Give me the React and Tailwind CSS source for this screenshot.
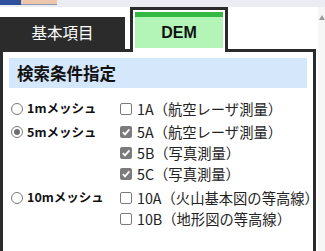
import React from 'react';

// 画面: DEM 検索条件指定パネル
const FONT = '"Noto Sans CJK JP", "Liberation Sans", sans-serif';

const GROUPS = [
  { label: '1mメッシュ', checked: false, items: [{ code: '1A', name: '（航空レーザ測量）', on: false }] },
  {
    label: '5mメッシュ',
    checked: true,
    items: [
      { code: '5A', name: '（航空レーザ測量）', on: true },
      { code: '5B', name: '（写真測量）', on: true },
      { code: '5C', name: '（写真測量）', on: true },
    ],
  },
  {
    label: '10mメッシュ',
    checked: false,
    items: [
      { code: '10A', name: '（火山基本図の等高線）', on: false },
      { code: '10B', name: '（地形図の等高線）', on: false },
    ],
  },
];

const Radio = ({ checked }) => (
  <span className="w-[12px] h-[12px] rounded-full border border-[#7a7a7a] bg-white flex items-center justify-center shrink-0">
    {checked && <span className="w-[6px] h-[6px] rounded-full bg-[#6e6e6e]" />}
  </span>
);

const Check = ({ on }) =>
  on ? (
    <span className="w-[12px] h-[12px] rounded-[2px] bg-[#7b7b7b] flex items-center justify-center shrink-0">
      <svg width="10" height="10" viewBox="0 0 10 10">
        <polyline points="1.8,5.2 4,7.4 8.4,2.4" fill="none" stroke="#fff" strokeWidth="1.8" />
      </svg>
    </span>
  ) : (
    <span className="w-[12px] h-[12px] rounded-[2px] border border-[#7a7a7a] bg-white shrink-0" />
  );

export default function App() {
  return (
    <div className="w-[325px] h-[251px] overflow-hidden bg-white relative" style={{ fontFamily: FONT }}>
      {/* top strip (cut off map toolbar) */}
      <div className="h-[7px] bg-[#e9ecf1] flex items-start">
        <div className="w-[21px] h-[5px] bg-[#2d4f9c]" />
        <div className="w-[36px] h-[5px] bg-[#eec6ae] border-b border-[#8a9ab0]" />
      </div>

      <div className="flex">
        <div className="w-[316px] shrink-0">
          {/* tabs */}
          <div className="flex items-end h-[42px]">
            <div className="w-[125px] h-[32px] bg-[#2b2b2b] text-white text-[15.5px] flex items-center justify-center">
              基本項目
            </div>
            <div className="ml-[5px] w-[98px] h-[45px] mb-[-3px] relative z-10 bg-white border-[3px] border-b-0 border-[#2b2b2b] px-[2px] pt-[2px] pb-[4px]">
              <div className="h-full bg-[#b3f4b7] border-t-[5px] border-[#33b843] flex items-center justify-center">
                <span className="text-[16px] font-bold text-[#111] leading-none" style={{ fontFamily: '"Liberation Sans", sans-serif' }}>
                  DEM
                </span>
              </div>
            </div>
          </div>

          {/* panel */}
          <div className="h-[230px] border-[3px] border-[#2b2b2b] bg-white px-[6px] pt-[6px]">
            <div className="h-[30px] bg-[#d5e7fb] flex items-center pl-[8px] text-[16.5px] font-bold text-[#111]">
              検索条件指定
            </div>

            <div className="mt-[10px] pl-[2px] flex flex-col gap-[2.5px]">
              {GROUPS.map((g) => (
                <div key={g.label} className="flex">
                  <div className="w-[109px] shrink-0 h-[21px] flex items-center gap-[4px]">
                    <Radio checked={g.checked} />
                    <span className="text-[12.5px] font-bold text-[#111] whitespace-nowrap">{g.label}</span>
                  </div>
                  <div className="flex flex-col">
                    {g.items.map((it) => (
                      <div key={it.code} className="h-[21px] flex items-center gap-[5px] text-[14.3px] text-[#222] whitespace-nowrap">
                        <Check on={it.on} />
                        <span>
                          {it.code}
                          {it.name}
                        </span>
                      </div>
                    ))}
                  </div>
                </div>
              ))}
            </div>
          </div>
        </div>

        {/* scrollbar */}
        <div className="ml-[2px] flex-1 bg-[#f6f6f6] flex justify-center pt-[8px]">
          <div className="w-0 h-0 border-l-[3px] border-r-[3px] border-b-[5px] border-l-transparent border-r-transparent border-b-[#9a9a9a]" />
        </div>
      </div>
    </div>
  );
}
